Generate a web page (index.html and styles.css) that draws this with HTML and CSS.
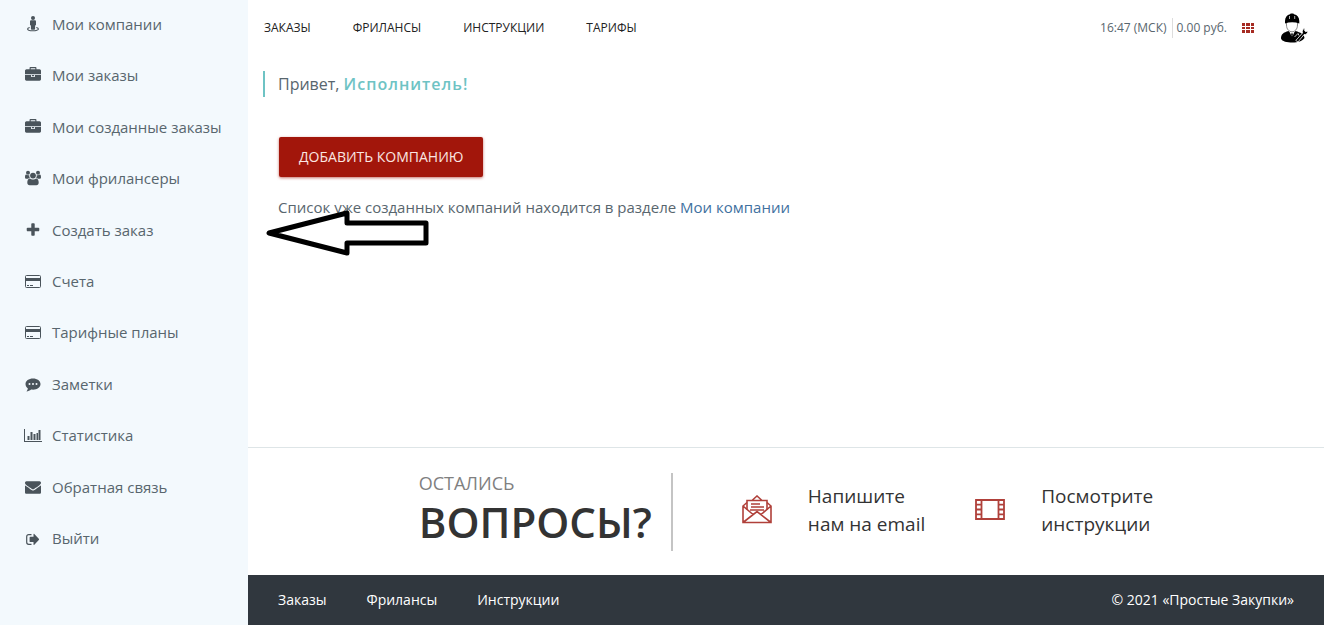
FILE: index.html
```html
<!DOCTYPE html>
<html lang="ru">
<head>
<meta charset="utf-8">
<title>Простые Закупки</title>
<link rel="stylesheet" href="styles.css">
</head>
<body>
<svg class="sprite" aria-hidden="true">
  <symbol id="i-person" viewBox="0 0 16 16">
    <circle cx="8" cy="2.100" r="2"/>
    <path d="M6.400 4.300h3.200c.9 0 1.400.5 1.400 1.300v3.200c0 .5-.3.8-.9.8v3.200c0 .6-.4.900-.9.900H6.800c-.5 0-.9-.3-.9-.9V9.600c-.6 0-.9-.3-.9-.8V5.600c0-.8.5-1.300 1.400-1.300z"/>
    <path d="M4.700 11.500c-1.400.3-2.100.8-2.100 1.400 0 1.100 2.400 1.900 5.400 1.900s5.400-.8 5.400-1.900c0-.6-.7-1.100-2.100-1.400" fill="none" stroke="currentColor" stroke-width="1.100"/>
  </symbol>
  <symbol id="i-briefcase" viewBox="0 0 1792 1792"><path d="M640 256h512v-128h-512v128zm1152 640v480q0 66-47 113t-113 47h-1472q-66 0-113-47t-47-113v-480h672v160q0 26 19 45t45 19h320q26 0 45-19t19-45v-160h672zm-768 0v128h-256v-128h256zm768-480v384h-1792v-384q0-66 47-113t113-47h352v-160q0-40 28-68t68-28h576q40 0 68 28t28 68v160h352q66 0 113 47t47 113z"/></symbol>
  <symbol id="i-users" viewBox="0 0 16 16">
    <circle cx="3" cy="2.700" r="2"/><circle cx="13" cy="2.700" r="2"/><circle cx="8" cy="5.600" r="2.900"/>
    <path d="M1.200 4.600C.3 4.600 0 6 0 7.300 0 8.300.6 8.800 1.500 8.800h1.300c.6-.6 1.200-.8 2-.9-.5-.8-.7-1.700-.6-2.900-1.100.4-2 .2-3-.4zM14.800 4.600c.9 0 1.200 1.400 1.200 2.700 0 1-.6 1.500-1.500 1.500h-1.300c-.6-.6-1.200-.8-2-.9.500-.8.7-1.700.6-2.900 1.100.4 2 .2 3-.4zM5 8.500c-1.900 0-2.700 1.800-2.700 4 0 1.700.9 2.800 2.300 2.800h6.800c1.400 0 2.300-1.100 2.300-2.800 0-2.200-.8-4-2.700-4-.8.6-1.700 1-3 1s-2.200-.4-3-1z"/>
  </symbol>
  <symbol id="i-plus" viewBox="0 0 1792 1792"><path d="M1600 736v192q0 40-28 68t-68 28h-416v416q0 40-28 68t-68 28h-192q-40 0-68-28t-28-68v-416h-416q-40 0-68-28t-28-68v-192q0-40 28-68t68-28h416v-416q0-40 28-68t68-28h192q40 0 68 28t28 68v416h416q40 0 68 28t28 68z"/></symbol>
  <symbol id="i-card" viewBox="0 0 16 16">
    <rect x=".5" y="2.500" width="15" height="12" rx="1" fill="none" stroke="currentColor"/>
    <path d="M.5 5h15v3H.5zM2 12h2v1H2zM5 12h3v1H5z"/>
  </symbol>
  <symbol id="i-comment" viewBox="0 0 16 16"><path fill-rule="evenodd" d="M8 2.500c4.300 0 7.500 2.400 7.500 5.600s-3.200 5.600-7.500 5.600c-.6 0-1.200 0-1.800-.1-1.400 1.200-3 1.800-4.700 1.900.7-.8 1.200-1.700 1.400-2.900C1.400 11.500.5 9.900.5 8.100.5 4.900 3.700 2.500 8 2.500zM4.500 7a1 1 0 1 0 0 2 1 1 0 0 0 0-2zm3.500 0a1 1 0 1 0 0 2 1 1 0 0 0 0-2zm3.500 0a1 1 0 1 0 0 2 1 1 0 0 0 0-2z"/></symbol>
  <symbol id="i-chart" viewBox="0 0 16 16"><path d="M-1 2H0v12h17v1H-1zM2.500 9h2v4h-2zM5.500 5h2v8h-2zM8.500 7h2v6h-2zM11.500 6h1.500v7h-1.500zM13.500 3h2v10h-2z"/></symbol>
  <symbol id="i-mail" viewBox="0 0 1792 1792"><path d="M1792 710v794q0 66-47 113t-113 47h-1472q-66 0-113-47t-47-113v-794q44 49 101 87 362 246 497 345 57 42 92.500 65.500t94.500 48 110 24.500h2q51 0 110-24.500t94.500-48 92.500-65.500q170-123 498-345 57-39 100-87zm0-294q0 79-49 151t-122 123q-376 261-468 325-10 7-42.500 31t-54 38.500-52 32.500-57.500 27-50 9h-2q-23 0-50-9t-57.500-27-52-32.500-54-38.500-42.500-31q-91-64-262-182.500t-205-142.500q-62-42-117-115.500t-55-136.500q0-78 41.500-130t118.500-52h1472q65 0 112.500 47t47.500 113z"/></symbol>
  <symbol id="i-exit" viewBox="0 0 16 16">
    <path d="M6.500 4.700H3.700c-1.200 0-2 .8-2 2v5.600c0 1.200.8 2 2 2h2.800" fill="none" stroke="currentColor" stroke-width="1.200"/>
    <path d="M8.500 4.400c0-.6.4-.7.800-.3l4.500 4.700c.4.400.4.900 0 1.300l-4.500 4.700c-.4.400-.8.200-.8-.3v-2.400H5.300c-.4 0-.7-.3-.7-.7v-4c0-.4.300-.7.700-.7h3.200z"/>
  </symbol>
</svg>

<div class="layout">
  <aside class="sidebar">
    <nav aria-label="Личный кабинет">
      <ul class="side-menu">
        <li><a href="#"><svg class="icon"><use href="#i-person"/></svg>Мои компании</a></li>
        <li><a href="#"><svg class="icon"><use href="#i-briefcase"/></svg>Мои заказы</a></li>
        <li><a href="#"><svg class="icon"><use href="#i-briefcase"/></svg>Мои созданные заказы</a></li>
        <li><a href="#"><svg class="icon"><use href="#i-users"/></svg>Мои фрилансеры</a></li>
        <li><a href="#"><svg class="icon"><use href="#i-plus"/></svg>Создать заказ</a></li>
        <li><a href="#"><svg class="icon"><use href="#i-card"/></svg>Счета</a></li>
        <li><a href="#"><svg class="icon"><use href="#i-card"/></svg>Тарифные планы</a></li>
        <li><a href="#"><svg class="icon"><use href="#i-comment"/></svg>Заметки</a></li>
        <li><a href="#"><svg class="icon"><use href="#i-chart"/></svg>Статистика</a></li>
        <li><a href="#"><svg class="icon"><use href="#i-mail"/></svg>Обратная связь</a></li>
        <li><a href="#"><svg class="icon"><use href="#i-exit"/></svg>Выйти</a></li>
      </ul>
    </nav>
  </aside>

  <div class="page">
    <header class="topbar">
      <nav class="top-menu" aria-label="Основное меню">
        <a href="#">Заказы</a>
        <a href="#">Фрилансы</a>
        <a href="#">Инструкции</a>
        <a href="#">Тарифы</a>
      </nav>
      <div class="account">
        <span class="clock">16:47 (МСК)</span>
        <span class="balance">0.00 руб.</span>
        <button class="apps" type="button" aria-label="Приложения">
          <svg width="12" height="10" viewBox="0 0 12 10"><path fill="#a62b22" d="M0 0h3v3H0zM4 0h4v3H4zM9 0h3v3H9zM0 4h3v2H0zM4 4h4v2H4zM9 4h3v2H9zM0 7h3v3H0zM4 7h4v3H4zM9 7h3v3H9z"/></svg>
        </button>
        <button class="avatar" type="button" aria-label="Профиль">
          <svg width="28" height="30" viewBox="0 0 28 30">
            <path d="M1 25.500c0-4.500 2.500-6 7.500-7.500L12 22l3.500-4c5 1.500 8.500 3 9 7-2 3-6.500 4.500-12 4.500S2 28.500 1 25.500z"/>
            <path d="M9.500 17.500l2.500 8 2.500-8z" fill="#fff"/>
            <path d="M12 20l1 1-.4 1 .8 3.500L12 28l-1.400-2.500.8-3.500-.4-1z"/>
            <path d="M6.500 8v4c0 4 2.500 6.800 5.500 6.800s5.500-2.800 5.500-6.800V8z" fill="#fff" stroke="#555" stroke-width=".7"/>
            <path d="M5 10.500V8c0-3.700 2-6 5-6.700L10.700.5h2.600l.7.800c3.300.7 5.300 3 5.300 6.700v2.500c-4.300-1.600-10-1.600-14.300 0z"/>
            <path d="M9.500 3v3M14.700 3v3" stroke="#ddd" stroke-width=".8"/>
            <path d="M15.800 27.500l6.700-7.500c-.7-2.200.4-4.200 2.400-5l-.3 2.700 1 1 2.300-.7c-.2 2.700-2 3.800-3.900 3.600L18 29z" stroke="#fff" stroke-width=".8"/>
            <path d="M14.500 24l3.500-3.500 1 2" fill="none" stroke="#fff" stroke-width=".8"/>
          </svg>
        </button>
      </div>
    </header>

    <main class="content">
      <p class="greeting">Привет, <strong>Исполнитель!</strong></p>
      <div class="intro">
        <button class="add-button" type="button">Добавить компанию</button>
        <p class="hint">Список уже созданных компаний находится в разделе <a href="#">Мои компании</a></p>
        <svg class="pointer" width="166" height="46" viewBox="0 0 166 46" aria-hidden="true"><path d="M4 23L82 3v10h79v20H82v10z" fill="none" stroke="#000" stroke-width="5" stroke-linejoin="round"/></svg>
      </div>
    </main>

    <section class="questions">
      <h2 class="questions-title"><span>Остались</span>Вопросы?</h2>
      <a class="contact" href="#">
        <svg width="32" height="30" viewBox="0 1 32 30" fill="none" stroke="#b0403a" stroke-width="1.600">
          <path d="M6 8.500l-4 3.500v16.500h28V12l-4-3.500M2 12l10 8.500M30 12l-10 8.500M2 28.500L16 17.500l14 11"/>
          <path d="M6 15.500V6.500h20v9M11 6.500L16 2l5 4.500M10 10h9M10 13h13M9 16h14"/>
        </svg>
        <span>Напишите<br>нам на email</span>
      </a>
      <a class="contact" href="#">
        <svg width="32" height="30" viewBox="0 1 32 30" fill="none" stroke="#b0403a" stroke-width="1.800">
          <path d="M2 6h28v19H2zM7.500 6v19M24.500 6v19M2 10.700h5.500M2 15.500h5.500M2 20.300h5.500M24.500 10.700H30M24.500 15.500H30M24.500 20.300H30"/>
        </svg>
        <span>Посмотрите<br>инструкции</span>
      </a>
    </section>

    <footer class="footer">
      <nav class="footer-menu" aria-label="Нижнее меню">
        <a href="#">Заказы</a>
        <a href="#">Фрилансы</a>
        <a href="#">Инструкции</a>
      </nav>
      <span>© 2021 «Простые Закупки»</span>
    </footer>
  </div>
</div>
</body>
</html>
```

FILE: styles.css
```css
* {
  box-sizing: border-box;
}

body {
  margin: 0;
  font-family: "Open Sans", "Noto Sans", sans-serif;
  font-size: 15px;
  line-height: 20px;
  color: #58666e;
  background: #fff;
}

a {
  color: inherit;
  text-decoration: none;
}

p,
h2 {
  margin: 0;
}

button {
  padding: 0;
  border: 0;
  background: none;
  font-family: inherit;
  cursor: pointer;
}

.sprite {
  display: none;
}

.layout {
  display: grid;
  grid-template-columns: 248px 1fr;
  min-height: 100vh;
}

.sidebar {
  background: #f3f9fd;
}

.side-menu {
  display: flex;
  flex-direction: column;
  justify-content: space-between;
  min-height: 562px;
  margin: 0;
  padding: 0;
  list-style: none;
}

.side-menu a {
  display: flex;
  align-items: center;
  gap: 11px;
  min-height: 48px;
  padding: 0 25px;
  white-space: nowrap;
}

.icon {
  width: 16px;
  height: 16px;
  overflow: visible;
  color: #4a545b;
  fill: currentColor;
}

.icon use {
  overflow: visible;
}

.sprite symbol {
  overflow: visible;
}

.page {
  display: flex;
  flex-direction: column;
  min-width: 0;
}

.topbar {
  display: flex;
  align-items: center;
  justify-content: space-between;
  padding: 13px 16px 11px;
}

.top-menu {
  display: flex;
  gap: 42px;
  font-size: 12px;
  color: #222;
  text-transform: uppercase;
}

.account {
  display: flex;
  align-items: center;
  font-size: 12px;
}

.clock {
  padding-right: 5px;
  border-right: 1px solid #ddd;
}

.balance {
  padding: 0 15px 0 4px;
}

.apps,
.avatar {
  display: flex;
}

.avatar {
  margin-left: 26px;
}

.content {
  flex: 1;
  padding: 17px 15px;
}

.greeting {
  padding-left: 13px;
  border-left: 2px solid #6ec3c4;
  font-size: 16px;
  line-height: 26px;
}

.greeting strong {
  font-weight: 600;
  letter-spacing: 1px;
  color: #6ec3c4;
}

.intro {
  position: relative;
  padding: 40px 15px;
}

.add-button {
  height: 40px;
  margin-left: 1px;
  padding: 0 20px 2px;
  border-radius: 2px;
  background: #a2160b;
  box-shadow: 0 1px 3px rgba(162, 22, 11, 0.6);
  font-size: 14px;
  font-weight: 500;
  color: #fbe6e2;
  text-transform: uppercase;
}

.hint {
  margin-top: 20px;
}

.hint a {
  color: #41719f;
}

.pointer {
  position: absolute;
  top: 113px;
  left: 2px;
}

.questions {
  display: flex;
  align-items: center;
  justify-content: center;
  min-height: 128px;
  border-top: 1px solid #dee5e7;
}

.questions-title {
  padding-right: 19px;
  border-right: 2px solid #c4c4c4;
  font-size: 42px;
  font-weight: 600;
  line-height: 58px;
  color: #333;
  text-transform: uppercase;
}

.questions-title span {
  display: block;
  font-size: 18px;
  font-weight: 400;
  line-height: 20px;
  color: #808080;
}

.contact {
  display: flex;
  align-items: center;
  gap: 35px;
  padding-bottom: 4px;
  font-size: 19px;
  line-height: 28px;
  color: #333;
}

.questions-title + .contact {
  margin-left: 68px;
}

.contact + .contact {
  margin-left: 49px;
}

.footer {
  display: flex;
  align-items: center;
  justify-content: space-between;
  min-height: 50px;
  padding: 0 30px;
  background: #30373e;
  font-size: 14px;
  color: #fff;
}

.footer-menu {
  display: flex;
  gap: 40px;
}
```
